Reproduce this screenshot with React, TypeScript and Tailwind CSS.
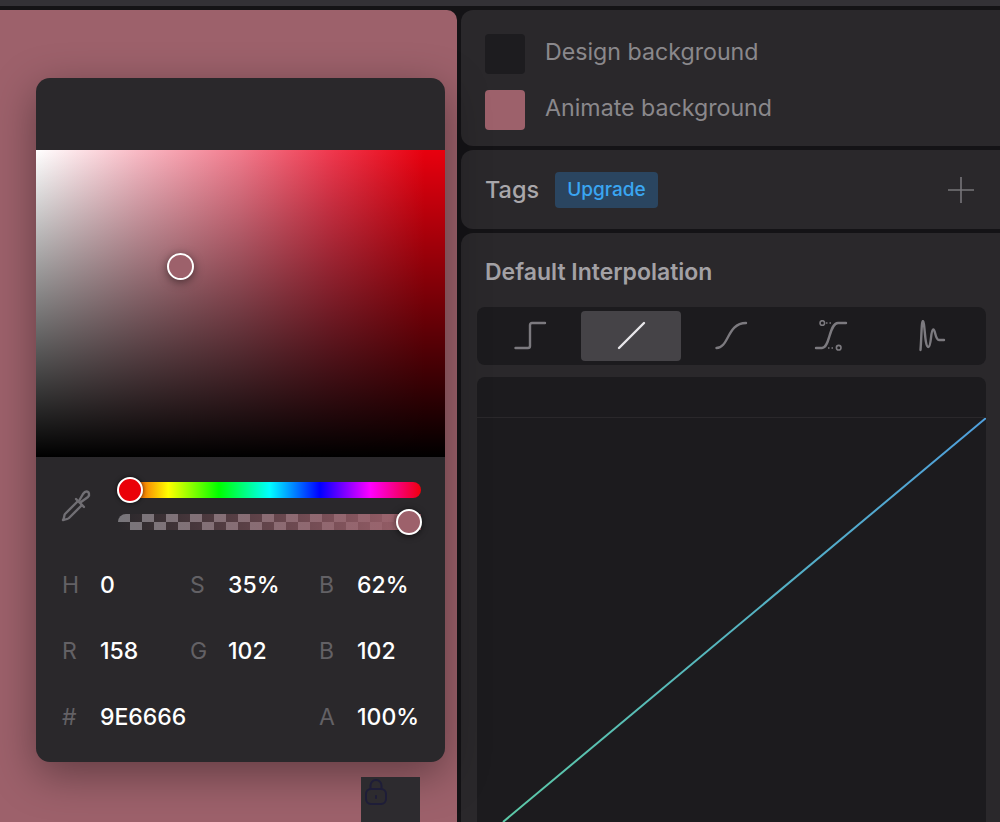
const font = "font-['Inter','Noto_Sans',sans-serif]";

const colorRows = [
  [
    ["H", "0"],
    ["S", "35%"],
    ["B", "62%"],
  ],
  [
    ["R", "158"],
    ["G", "102"],
    ["B", "102"],
  ],
  [
    ["#", "9E6666"],
    ["", ""],
    ["A", "100%"],
  ],
];

const curves = [
  { id: "step", active: false, d: "M4.5 28H17Q19 28 19 26V5Q19 3 21 3H34" },
  { id: "linear", active: true, d: "M8 28L33 3" },
  { id: "smooth", active: false, d: "M5.5 28C18 28 16 3 35 3" },
  { id: "bezier", active: false, d: "M4 28H10C18 28 17 3 26 3H34" },
  { id: "spring", active: false, d: "M8.5 30C9.5 18 9.500 1 10.800 1C13 1 12.500 27 16.300 27C19.500 27 18.500 9.500 21.300 9.500C23.500 9.500 23 20 27 20H32" },
];

function CurveIcon({ id, active, d }: { id: string; active: boolean; d: string }) {
  return (
    <svg width="40" height="32" viewBox="0 0 40 32" fill="none">
      <path
        d={d}
        stroke={active ? "#e8e7ea" : "#7c7a7f"}
        strokeWidth="2.4"
        strokeLinecap="round"
      />
      {id === "bezier" && (
        <>
          <circle cx="10.300" cy="3" r="2.300" stroke="#7c7a7f" strokeWidth="1.600" />
          <circle cx="26.700" cy="27.700" r="2.300" stroke="#7c7a7f" strokeWidth="1.600" />
          <path d="M14 3H21M16 28H23" stroke="#7c7a7f" strokeWidth="1.600" strokeDasharray="1.500 2" />
        </>
      )}
    </svg>
  );
}

function ColorPopover() {
  return (
    <div className="absolute left-[36px] top-[68px] flex h-[684px] w-[409px] flex-col overflow-hidden rounded-[14px] bg-[#2a282b] shadow-[0_12px_44px_rgba(0,0,0,0.38)]">
      <div className="h-[72px] shrink-0" />
      <div className="relative h-[307px] shrink-0 bg-[linear-gradient(to_right,#ffffff,#f9b9c4_25%,#f27a8c_50%,#f0384e_72%,#e8000e_95%)]">
        <div className="h-full bg-[linear-gradient(to_bottom,transparent,#000000)]" />
        <div className="absolute left-[131px] top-[103px] h-[27px] w-[27px] rounded-full border-2 border-white bg-[#9d616b] shadow-[0_2px_10px_rgba(0,0,0,0.5)]" />
      </div>
      <div className="flex items-center pl-[24px] pr-[24px] pt-[25px]">
        <svg width="34" height="34" viewBox="0 0 34 34" fill="none" stroke="#716f74" strokeWidth="2.400" strokeLinecap="round" strokeLinejoin="round" className="mr-[24px] shrink-0">
          <path d="M18 12L5 25C4 26 4.500 29 3 31C5.500 30.500 8 30 9 29L22 16" />
          <path d="M16 10L24 18" />
          <path d="M21 13L28 8C30 6 29 2.500 26.500 2.500C25 2.500 24 3.500 23 5L19.500 11" />
        </svg>
        <div className="flex flex-1 flex-col gap-[16px]">
          <div className="relative h-[16px] rounded-full bg-[linear-gradient(to_right,#f0000a_0%,#ffff00_16.6%,#00ff00_33.3%,#00ffff_50%,#0000ff_66.6%,#ff00ff_83.3%,#f0000a_100%)]">
            <div className="absolute left-[-1px] top-[-5px] h-[26px] w-[26px] rounded-full border-[2.500px] border-white bg-[#ea0008] shadow-[0_0_4px_rgba(0,0,0,0.7)]" />
          </div>
          <div className="relative h-[16px]">
            <div className="h-full rounded-l-full bg-[repeating-conic-gradient(#2a282b_0_25%,#78767b_0_50%)] bg-[length:24px_16px]">
              <div className="h-full bg-[linear-gradient(to_right,transparent,#9d616b)]" />
            </div>
            <div className="absolute right-[-1px] top-[-5px] h-[26px] w-[26px] rounded-full border-[2.500px] border-white bg-[#9d616b] shadow-[0_1px_6px_rgba(0,0,0,0.6)]" />
          </div>
        </div>
      </div>
      <div className="mt-[22px] flex flex-col pl-[26px] text-[23px] font-medium">
        {colorRows.map((row, i) => (
          <div key={i} className="grid h-[66px] grid-cols-[128px_129px_1fr] items-center">
            {row.map(([label, value], j) => (
              <div key={j} className="flex">
                <span className="w-[38px] font-normal text-[#636165]">{label}</span>
                <span className="text-white">{value}</span>
              </div>
            ))}
          </div>
        ))}
      </div>
    </div>
  );
}

export default function App() {
  return (
    <div className={`flex h-[822px] w-[1000px] flex-col overflow-hidden bg-[#141316] ${font}`}>
      <div className="h-[6px] shrink-0 bg-[#333136]" />
      <div className="flex min-h-0 flex-1 gap-[4px] pt-[4px]">
        <div className="relative w-[457px] shrink-0 rounded-tr-[10px] bg-[#9d616b]">
          <ColorPopover />
          <div className="absolute left-[361px] top-[767px] h-[45px] w-[59px] bg-[#2d2b2f]">
            <svg width="24" height="28" viewBox="0 0 24 28" fill="none" stroke="#1e1d38" strokeWidth="2" className="ml-[3px] mt-[1px]">
              <rect x="2" y="11" width="20" height="15" rx="5" />
              <path d="M6.500 11V7.500C6.500 4.500 9 2 12 2S17.500 4.500 17.500 7.500V11" />
              <path d="M12 18V20" strokeLinecap="round" />
            </svg>
          </div>
        </div>

        <div className="flex min-w-0 flex-1 flex-col gap-[4px]">
          <section className="flex h-[136px] shrink-0 flex-col gap-[16px] rounded-l-[12px] bg-[#2a282b] pl-[24px] pt-[24px] text-[23.200px] text-[#8a888c]">
            <div className="flex items-center gap-[20px]">
              <div className="h-[40px] w-[40px] rounded-[4px] bg-[#1d1c1f]" />
              <span className="relative top-[-2px]">Design background</span>
            </div>
            <div className="flex items-center gap-[20px]">
              <div className="h-[40px] w-[40px] rounded-[4px] bg-[#9d616b]" />
              <span className="relative top-[-2px]">Animate background</span>
            </div>
          </section>

          <section className="flex h-[79px] shrink-0 items-center rounded-l-[12px] bg-[#2a282b] pl-[24px] pr-[26px]">
            <span className="text-[23.500px] font-medium text-[#a9a7ab]">Tags</span>
            <span className="ml-[16px] flex h-[36px] items-center rounded-[4px] bg-[#2a4560] px-[12px] pt-[1px] text-[19px] font-medium text-[#3aa6f2]">
              Upgrade
            </span>
            <svg width="26" height="26" viewBox="0 0 26 26" stroke="#77757a" strokeWidth="1.600" className="ml-auto">
              <path d="M13 0V26M0 13H26" />
            </svg>
          </section>

          <section className="flex min-h-0 flex-1 flex-col rounded-tl-[12px] bg-[#2a282b] pl-[16px] pr-[14px]">
            <h2 className="pl-[8px] pt-[25px] text-[23px] leading-[28px] font-semibold text-[#a3a1a5]">
              Default Interpolation
            </h2>
            <div className="mt-[21px] grid h-[58px] shrink-0 grid-cols-5 rounded-[8px] bg-[#1c1b1e] p-[4px]">
              {curves.map((c) => (
                <div key={c.id} className={`flex items-center justify-center rounded-[4px] ${c.active ? "bg-[#454347]" : ""}`}>
                  <CurveIcon {...c} />
                </div>
              ))}
            </div>
            <div className="mt-[12px] flex min-h-0 flex-1 flex-col rounded-t-[8px] bg-[#1c1b1e]">
              <div className="h-[41px] shrink-0 border-b border-[#2a282b]" />
              <svg className="min-h-0 flex-1" viewBox="0 0 509 404" preserveAspectRatio="none" fill="none">
                <defs>
                  <linearGradient id="curve" x1="0" y1="1" x2="1" y2="0">
                    <stop offset="0" stopColor="#5cc9a7" />
                    <stop offset="1" stopColor="#4f9fdc" />
                  </linearGradient>
                </defs>
                <path d="M26 404L509 0" stroke="url(#curve)" strokeWidth="2" />
              </svg>
            </div>
          </section>
        </div>
      </div>
    </div>
  );
}
